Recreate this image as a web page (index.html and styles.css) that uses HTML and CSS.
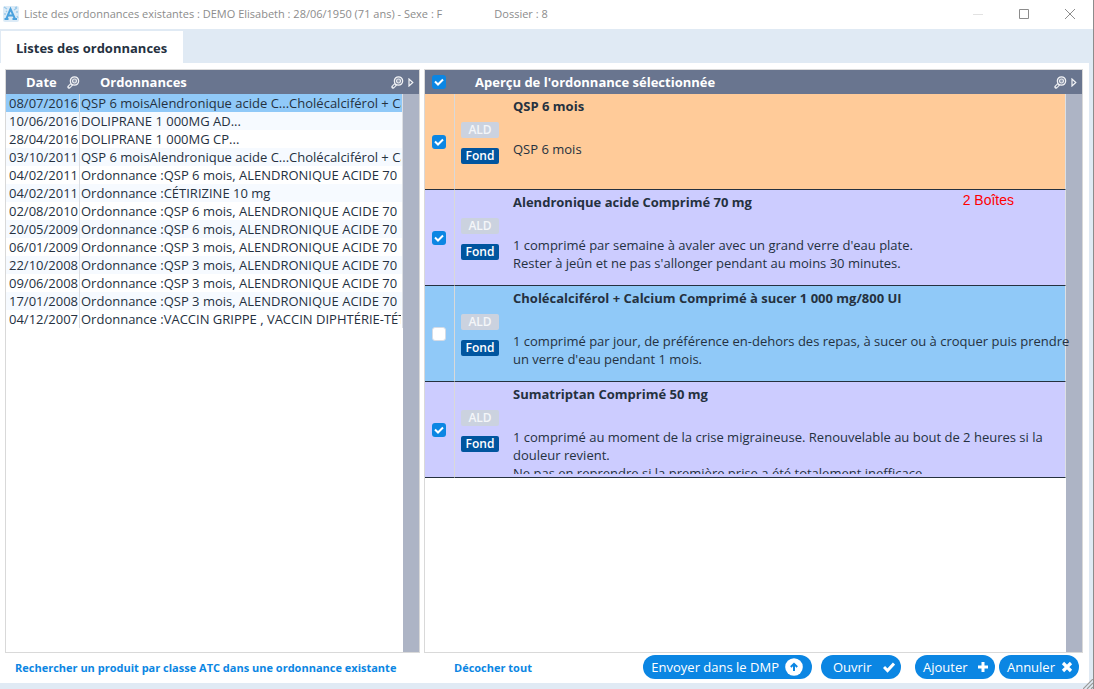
FILE: index.html
```html
<!DOCTYPE html>
<html lang="fr">
<head>
<meta charset="utf-8">
<title>Liste des ordonnances existantes</title>
<link rel="stylesheet" href="styles.css">
</head>
<body>
<svg class="defs" aria-hidden="true">
  <symbol id="loupe" viewBox="0 0 13 13">
    <path d="M4.500 8.500L2 11" stroke="#e6e8ed" stroke-width="3.400" stroke-linecap="round"/>
    <path d="M4 9L2.200 10.800" stroke="#69758f" stroke-width="1.200"/>
    <circle cx="7.500" cy="5" r="4.200" fill="#7d879d" stroke="#f2f3f6" stroke-width="1.200"/>
    <circle cx="7.500" cy="5" r="2" fill="#8f98ac" stroke="#e6e8ed" stroke-width="1.200"/>
  </symbol>
  <symbol id="arrow" viewBox="0 0 6 9"><path d="M1 1 V8 L4.800 4.500 Z" fill="#69758f" stroke="#f2f3f6" stroke-width="1.200"/></symbol>
</svg>
<div class="window">
  <header class="titlebar">
    <svg class="logo" viewBox="0 0 16 16"><rect width="16" height="16" rx="2" fill="#dcebf7"/><path d="M1 1l3 2M14 2l-3 2M1 8h2M14 10l1 2M12 2l2-1M13 6h2M3 5l1 1" stroke="#9dcbea" stroke-width="1.400"/><path d="M3.500 12.500L7.500 3L11.800 12.500M5 9.500H11M1.500 13H5.500M9.500 13H14" fill="none" stroke="#4ba2de" stroke-width="2"/></svg>
    <span class="caption">Liste des ordonnances existantes : DEMO Elisabeth : 28/06/1950 (71 ans) - Sexe : F</span>
    <span class="caption file">Dossier : 8</span>
    <div class="winbtns">
      <button aria-label="Réduire" disabled><svg viewBox="0 0 12 12"><path d="M1 6.500H11" stroke="#e2e2e2"/></svg></button>
      <button aria-label="Agrandir"><svg viewBox="0 0 12 12"><path d="M1.500 1.500H10.500V10.500H1.500Z" fill="none" stroke="#8c8c8c"/></svg></button>
      <button aria-label="Fermer"><svg viewBox="0 0 12 12"><path d="M1 1L11 11M11 1L1 11" stroke="#8c8c8c"/></svg></button>
    </div>
  </header>
  <nav class="tabs"><button class="tab">Listes des ordonnances</button></nav>
  <main class="content">
    <section class="panel">
      <table class="list">
        <colgroup><col class="c-date"><col><col class="c-bar"></colgroup>
        <thead><tr>
          <th><span class="head date-head">Date <svg class="loupe"><use href="#loupe"/></svg></span></th>
          <th colspan="2"><span class="head name-head">Ordonnances <span class="tools"><svg class="loupe"><use href="#loupe"/></svg><svg class="arrow"><use href="#arrow"/></svg></span></span></th>
        </tr></thead>
        <tbody>
          <tr class="selected"><td>08/07/2016</td><td><div>QSP 6 moisAlendronique acide C...Cholécalciférol + Ca.</div></td><td></td></tr>
          <tr><td>10/06/2016</td><td><div>DOLIPRANE 1 000MG AD...</div></td><td></td></tr>
          <tr><td>28/04/2016</td><td><div>DOLIPRANE 1 000MG CP...</div></td><td></td></tr>
          <tr><td>03/10/2011</td><td><div>QSP 6 moisAlendronique acide C...Cholécalciférol + Ca.</div></td><td></td></tr>
          <tr><td>04/02/2011</td><td><div>Ordonnance :QSP 6 mois, ALENDRONIQUE ACIDE 70 m</div></td><td></td></tr>
          <tr><td>04/02/2011</td><td><div>Ordonnance :CÉTIRIZINE 10 mg</div></td><td></td></tr>
          <tr><td>02/08/2010</td><td><div>Ordonnance :QSP 6 mois, ALENDRONIQUE ACIDE 70 m</div></td><td></td></tr>
          <tr><td>20/05/2009</td><td><div>Ordonnance :QSP 6 mois, ALENDRONIQUE ACIDE 70 m</div></td><td></td></tr>
          <tr><td>06/01/2009</td><td><div>Ordonnance :QSP 3 mois, ALENDRONIQUE ACIDE 70 m</div></td><td></td></tr>
          <tr><td>22/10/2008</td><td><div>Ordonnance :QSP 3 mois, ALENDRONIQUE ACIDE 70 m</div></td><td></td></tr>
          <tr><td>09/06/2008</td><td><div>Ordonnance :QSP 3 mois, ALENDRONIQUE ACIDE 70 m</div></td><td></td></tr>
          <tr><td>17/01/2008</td><td><div>Ordonnance :QSP 3 mois, ALENDRONIQUE ACIDE 70 m</div></td><td></td></tr>
          <tr><td>04/12/2007</td><td><div>Ordonnance :VACCIN GRIPPE , VACCIN DIPHTÉRIE-TÉT</div></td><td></td></tr>
        </tbody>
      </table>
    </section>
    <section class="panel">
      <table class="preview">
        <colgroup><col class="c-check"><col class="c-tags"><col><col class="c-bar"></colgroup>
        <thead><tr>
          <th><input type="checkbox" aria-label="Tout cocher" checked></th>
          <th colspan="3"><span class="head preview-head">Aperçu de l'ordonnance sélectionnée <span class="tools"><svg class="loupe"><use href="#loupe"/></svg><svg class="arrow"><use href="#arrow"/></svg></span></span></th>
        </tr></thead>
        <tbody>
          <tr class="orange"><td><input type="checkbox" aria-label="QSP 6 mois" checked></td><td><div class="tags"><button class="tag">ALD</button><button class="tag on">Fond</button></div></td>
            <td><div class="name"><b>QSP 6 mois</b></div><div class="dose">QSP 6 mois</div></td><td></td></tr>
          <tr class="violet"><td><input type="checkbox" aria-label="Alendronique acide" checked></td><td><div class="tags"><button class="tag">ALD</button><button class="tag on">Fond</button></div></td>
            <td><div class="name"><b>Alendronique acide Comprimé 70 mg</b><span class="qty">2 Boîtes</span></div><div class="dose">1 comprimé par semaine à avaler avec un grand verre d'eau plate.<br>Rester à jeûn et ne pas s'allonger pendant au moins 30 minutes.</div></td><td></td></tr>
          <tr class="blue"><td><input type="checkbox" aria-label="Cholécalciférol + Calcium"></td><td><div class="tags"><button class="tag">ALD</button><button class="tag on">Fond</button></div></td>
            <td><div class="name"><b>Cholécalciférol + Calcium Comprimé à sucer 1 000 mg/800 UI</b></div><div class="dose">1 comprimé par jour, de préférence en-dehors des repas, à sucer ou à croquer puis prendre un verre d'eau pendant 1 mois.</div></td><td></td></tr>
          <tr class="violet"><td><input type="checkbox" aria-label="Sumatriptan" checked></td><td><div class="tags"><button class="tag">ALD</button><button class="tag on">Fond</button></div></td>
            <td><div class="name"><b>Sumatriptan Comprimé 50 mg</b></div><div class="dose">1 comprimé au moment de la crise migraineuse. Renouvelable au bout de 2 heures si la douleur revient.<br>Ne pas en reprendre si la première prise a été totalement inefficace.</div></td><td></td></tr>
        </tbody>
      </table>
    </section>
    <div class="foot-left"><a href="#">Rechercher un produit par classe ATC dans une ordonnance existante</a></div>
    <div class="foot-right">
      <a href="#">Décocher tout</a>
      <div class="actions">
        <button class="pill">Envoyer dans le DMP <svg class="big" viewBox="0 0 18 18"><circle cx="9" cy="9" r="8.800" fill="#fff"/><path d="M9 13V6M5.800 9L9 5.800L12.200 9" fill="none" stroke="#0b86e3" stroke-width="2"/></svg></button>
        <button class="pill open">Ouvrir <svg viewBox="0 0 12 12"><path d="M1 6L4.500 9.500L11 2.500" fill="none" stroke="#fff" stroke-width="3"/></svg></button>
        <button class="pill">Ajouter <svg viewBox="0 0 12 12"><path d="M6 1V11M1 6H11" stroke="#fff" stroke-width="3"/></svg></button>
        <button class="pill">Annuler <svg viewBox="0 0 12 12"><path d="M2 2L10 10M10 2L2 10" stroke="#fff" stroke-width="3.200"/></svg></button>
      </div>
    </div>
  </main>
  <div class="bottom"><svg class="grip" viewBox="0 0 10 10"><path d="M0 10L10 0M4 10L10 4M8 10L10 8" stroke="#9a9a98" stroke-width="1.200"/></svg></div>
</div>
</body>
</html>
```

FILE: styles.css
```css
* { box-sizing: border-box; }
body { margin: 0; font: 13px/18px "Open Sans", sans-serif; color: #25313f; }
button { font: inherit; border: 0; padding: 0; background: none; color: inherit; }
.defs { position: absolute; width: 0; height: 0; }
.window { min-height: 100vh; display: flex; flex-direction: column; background: #e0eaf4; border-right: 1px solid #8c8c8c; }

.titlebar { height: 29px; display: flex; align-items: center; background: #fff; padding: 0 9px 2px 3px; }
.logo { width: 16px; height: 16px; margin-right: 5px; }
.caption { font-size: 11px; color: #8c8c8c; }
.file { margin-left: 52px; }
.winbtns { margin-left: auto; display: flex; gap: 17px; }
.winbtns button { width: 29px; height: 24px; display: grid; place-items: center; }
.winbtns svg { width: 12px; height: 12px; }

.tabs { height: 34px; padding: 2px 1px 0; display: flex; }
.tab { background: #fff; font-weight: bold; padding: 2px 16px 0 15px; }

.content { flex: 1; background: #fff; margin-right: 4px; padding: 6px 6px 0 5px; display: grid; grid-template-columns: 415fr 659fr; grid-template-rows: 1fr 30px; column-gap: 4px; }
.panel { min-width: 0; border: 1px solid #d9d9d9; background: linear-gradient(to right, #fff calc(100% - 16px), #adb4c5 0); }
table { width: 100%; table-layout: fixed; border-collapse: separate; border-spacing: 0; }
th, td { padding: 0; }
th { height: 24px; background: #69758f; color: #fff; text-align: left; }
.c-bar { width: 16px; }
.head { display: flex; align-items: center; }
.loupe { width: 13px; height: 13px; }
.arrow { width: 6px; height: 9px; }
.tools { margin-left: auto; padding-right: 5px; display: flex; align-items: center; gap: 4px; }

.c-date { width: 74px; }
.date-head { padding-left: 20px; gap: 10px; }
.name-head { padding-left: 20px; }
.list td { height: 18px; white-space: nowrap; }
.list td:nth-child(1) { padding-left: 3px; border-right: 1px solid #dcdfe4; }
.list td:nth-child(2) { padding: 0 1px; border-right: 1px solid #dcdfe4; }
.list td div { overflow: hidden; }
.list tr:nth-child(even) td:not(:last-child) { background: #f6faff; }
.list .selected td:not(:last-child) { background: #90c9f8; }

.c-check { width: 30px; }
.c-tags { width: 51px; }
.preview-head { padding-left: 20px; }
input { appearance: none; display: block; width: 14px; height: 14px; margin: 0 0 0 7px; border: 1px solid #d5dce6; border-radius: 3px; background: #fff; }
input:checked { border: 0; background: #0b86e3 url("data:image/svg+xml,%3Csvg xmlns='http://www.w3.org/2000/svg' viewBox='0 0 14 14'%3E%3Cpath d='M3 6.500L6 9.500L11 4.500' fill='none' stroke='white' stroke-width='2'/%3E%3C/svg%3E"); }
.preview td { height: 96px; vertical-align: top; }
.preview td:not(:last-child) { border-bottom: 1px solid #25313f; }
.preview td:nth-child(1) { vertical-align: middle; border-right: 1px solid #d9d9d9; }
.preview td:nth-child(3) { border-right: 1px solid #dcdfe4; padding: 3px 0 3px 7px; }
.orange td:not(:last-child) { background: #ffcb99; }
.violet td:not(:last-child) { background: #ccccff; }
.blue td:not(:last-child) { background: #90c9f8; }
.tags { display: grid; gap: 10px; padding: 28px 7px 0 6px; }
.tag { height: 16px; line-height: 16px; font-size: 12px; font-weight: 600; color: #f4f6f9; background: #cbd2df; border-radius: 2px; text-align: center; }
.on { color: #fff; background: #00559f; }
.name { display: flex; justify-content: space-between; padding-right: 51px; margin-bottom: 25px; }
.qty { font: 14px/14px "Liberation Sans", sans-serif; color: #f00; }
.dose { height: 46px; margin-right: -8px; overflow: hidden; }

a { font-size: 11px; font-weight: bold; color: #0b86e3; text-decoration: none; }
.foot-left { padding: 5px 10px; }
.foot-right { display: flex; justify-content: space-between; padding: 0 4px 0 30px; }
.foot-right a { padding-top: 6px; }
.actions { display: flex; padding-top: 2px; gap: 4px; }
.pill { min-width: 80px; height: 24px; padding: 0 6px 0 8px; border-radius: 12px; background: #0b86e3; color: #fff; display: flex; align-items: center; justify-content: space-between; gap: 6px; }
.pill svg { width: 12px; height: 12px; }
.pill .big { width: 18px; height: 18px; margin-right: 3px; }
.open { margin: 0 10px 0 5px; padding-left: 12px; }
.bottom { height: 6px; display: flex; justify-content: flex-end; align-items: flex-end; }
.grip { width: 10px; height: 10px; flex: none; }
```
